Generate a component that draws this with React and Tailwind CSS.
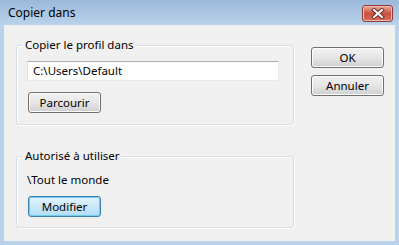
import React from "react";

const font = { fontFamily: '"Noto Sans", "Open Sans", sans-serif' };

const Button = ({ children, primary, className = "" }) => (
  <div
    className={`flex h-[21px] w-[73px] items-center justify-center rounded-[3px] border text-[11.5px] text-black ${
      primary
        ? "border-[#3c7fb1] bg-gradient-to-b from-[#e5f5fd] via-[#c9e8f8] to-[#b2def5] shadow-[inset_0_0_0_1px_#6fcdf2]"
        : "border-[#707070] bg-gradient-to-b from-[#f2f2f2] via-[#e6e6e6] to-[#cfcfcf] shadow-[inset_0_0_0_1px_#fcfcfc]"
    } ${className}`}
  >
    {children}
  </div>
);

const GroupBox = ({ label, className = "", children }) => (
  <div className={`flex flex-col rounded-[3px] border border-[#d5dfe5] shadow-[inset_1px_1px_0_#ffffff,1px_1px_0_#ffffff] ${className}`}>
    <span className="-mt-[9px] ml-[6px] block w-fit bg-[#f0f0f0] px-[2px] text-[11.5px] leading-[16px] text-black">{label}</span>
    {children}
  </div>
);

export default function App() {
  return (
    <div className="flex h-[245px] w-[399px] flex-col bg-[#b9d1ea]" style={font}>
      {/* Title bar */}
      <div className="flex h-[25px] items-start justify-between bg-gradient-to-b from-[#9bb8da] to-[#bad2eb] pl-[8px] pr-[6px]">
        <span className="pt-[5px] text-[12px] leading-[16px] text-black">Copier dans</span>
        <div className="mt-[5px] flex h-[17px] w-[31px] items-center justify-center rounded-[3px] border border-[#8d3c37] bg-gradient-to-b from-[#e9a99c] via-[#c9523f] to-[#d36e5f] shadow-[inset_0_0_0_1px_#f0b8ad]">
          <svg width="14" height="11" viewBox="0 0 14 11">
            <path d="M3 2 L11 9 M11 2 L3 9" stroke="#6b2a25" strokeWidth="4" strokeLinecap="square" />
            <path d="M3 2 L11 9 M11 2 L3 9" stroke="#ffffff" strokeWidth="2" strokeLinecap="square" />
          </svg>
        </div>
      </div>

      {/* Client area */}
      <div className="mx-[4px] flex h-[216px] bg-[#f0f0f0]">
        <div className="flex flex-col pl-[12px] pt-[20px]">
          <GroupBox label="Copier le profil dans" className="h-[80px] w-[278px]">
            <div className="ml-[10px] mt-[8px] flex h-[20px] w-[252px] items-center border border-[#e3e9ef] border-t-[#abadb3] border-l-[#dbdfe6] bg-white pl-[5px] text-[11.5px] text-black">
              C:\Users\Default
            </div>
            <Button className="ml-[11px] mt-[11px]">Parcourir</Button>
          </GroupBox>

          <GroupBox label="Autorisé à utiliser" className="mt-[31px] h-[72px] w-[278px]">
            <span className="ml-[10px] mt-[8px] text-[11.5px] leading-[16px] text-black">\Tout le monde</span>
            <Button primary className="ml-[11px] mt-[8px]">Modifier</Button>
          </GroupBox>
        </div>

        <div className="ml-[17px] flex flex-col gap-[7px] pt-[22px]">
          <Button>OK</Button>
          <Button>Annuler</Button>
        </div>
      </div>
    </div>
  );
}
